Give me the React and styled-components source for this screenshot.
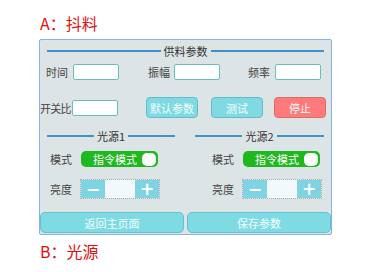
import React from 'react';
import styled, { createGlobalStyle } from 'styled-components';

const GlobalStyle = createGlobalStyle`
  body {
    margin: 0;
    background: #ffffff;
    font-family: "Noto Sans CJK SC", "Noto Sans", sans-serif;
  }
`;

const Page = styled.div`
  width: 370px;
  height: 272px;
  overflow: hidden;
`;

const Heading = styled.div`
  padding-left: 40px;
  margin-top: ${p => p.$top}px;
  line-height: 22px;
  height: 22px;
  font-size: 16px;
  color: #e01010;
`;

const Panel = styled.div`
  margin: 5px 0 0 39px;
  width: 291px;
  height: 194px;
  border: 1px solid #86b2e6;
  border-radius: 2px;
  background: #dde4e5;
  display: flex;
  flex-direction: column;
`;

const Legend = styled.div`
  display: flex;
  align-items: center;
  gap: 3px;
  height: 14px;
  margin: ${p => p.$top || 0}px ${p => p.$right || 7}px 0 ${p => p.$left || 7}px;
  font-size: 11px;
  color: #333;
  white-space: nowrap;
`;

const Line = styled.span`
  flex: 1;
  height: 2px;
  background: #3f93c9;
`;

const Row = styled.div`
  display: flex;
  align-items: center;
  height: ${p => p.$h}px;
  margin-top: ${p => p.$top}px;
  padding-left: ${p => p.$left}px;
`;

const Field = styled.div`
  display: flex;
  align-items: center;
  gap: ${p => p.$gap}px;
  width: ${p => p.$w}px;
`;

const Label = styled.span`
  font-size: 11px;
  color: #444;
  white-space: nowrap;
  letter-spacing: ${p => p.$tight ? '-0.7px' : 'normal'};
`;

const Input = styled.div`
  width: 44px;
  height: 14px;
  background: #ffffff;
  border: 1px solid #68bfb6;
  border-radius: 2px;
`;

const Button = styled.div`
  width: ${p => p.$w || 52}px;
  height: ${p => p.$h || 21}px;
  margin-left: ${p => p.$ml || 0}px;
  box-sizing: border-box;
  display: flex;
  align-items: center;
  justify-content: center;
  background: ${p => (p.$danger ? '#ff7b7b' : '#80d9e3')};
  border: 1px solid ${p => (p.$danger ? '#d86b6b' : '#5ebfc8')};
  border-radius: 4px;
  color: #f4ffff;
  font-size: 11px;
`;

const Columns = styled.div`
  display: grid;
  grid-template-columns: 145px 1fr;
  margin-top: 11px;
`;

const Column = styled.div`
  display: flex;
  flex-direction: column;
`;

const Toggle = styled.div`
  width: 77px;
  height: 16px;
  box-sizing: border-box;
  background: #1fb81f;
  border-radius: 5px;
  display: flex;
  align-items: center;
  padding: 0 2px 0 12px;
  color: #ffffff;
  font-size: 11px;
`;

const Knob = styled.span`
  margin-left: auto;
  width: 14px;
  height: 13px;
  border-radius: 5px;
  background: #ffffff;
`;

const Stepper = styled.div`
  display: grid;
  grid-template-columns: 24px 30px 24px;
  width: 78px;
  height: 18px;
  outline: 1px dotted #a8b4b8;
`;

const StepBtn = styled.div`
  background: #7fd4e4;
  color: #ffffff;
  font-size: 17px;
  font-weight: bold;
  font-family: "DejaVu Sans", sans-serif;
  display: flex;
  align-items: center;
  justify-content: center;
  line-height: 1;
`;

const StepValue = styled.div`
  background: #f3f8fc;
`;

const Footer = styled.div`
  display: grid;
  grid-template-columns: 1fr 1fr;
  gap: 3px;
  margin-top: 14px;
`;

const BigButton = styled(Button)`
  width: auto;
  height: 21px;
  background: #7edbe4;
  border-color: #62c3cc;
  border-radius: 5px;
`;

function LightSource({ name, left, right, labelLeft }) {
  return (
    <Column>
      <Legend $left={left} $right={right}>
        <Line />
        {name}
        <Line />
      </Legend>
      <Row $h={16} $top={8} $left={labelLeft}>
        <Field $gap={9}>
          <Label>模式</Label>
          <Toggle>
            指令模式
            <Knob />
          </Toggle>
        </Field>
      </Row>
      <Row $h={18} $top={13} $left={labelLeft}>
        <Field $gap={9}>
          <Label>亮度</Label>
          <Stepper>
            <StepBtn>−</StepBtn>
            <StepValue />
            <StepBtn>+</StepBtn>
          </Stepper>
        </Field>
      </Row>
    </Column>
  );
}

function App() {
  return (
    <Page>
      <GlobalStyle />
      <Heading $top={12}>A：抖料</Heading>
      <Panel>
        <Legend $top={4}>
          <Line />
          供料参数
          <Line />
        </Legend>
        <Row $h={16} $top={6} $left={6}>
          <Field $gap={5} $w={102}>
            <Label>时间</Label>
            <Input />
          </Field>
          <Field $gap={4} $w={100}>
            <Label>振幅</Label>
            <Input />
          </Field>
          <Field $gap={5}>
            <Label>频率</Label>
            <Input />
          </Field>
        </Row>
        <Row $h={21} $top={17} $left={0}>
          <Field $gap={1} $w={106}>
            <Label $tight>开关比</Label>
            <Input />
          </Field>
          <Button>默认参数</Button>
          <Button $ml={13}>测试</Button>
          <Button $ml={11} $danger>停止</Button>
        </Row>
        <Columns>
          <LightSource name="光源1" left={7} right={10} labelLeft={10} />
          <LightSource name="光源2" left={10} right={7} labelLeft={27} />
        </Columns>
        <Footer>
          <BigButton>返回主页面</BigButton>
          <BigButton>保存参数</BigButton>
        </Footer>
      </Panel>
      <Heading $top={5}>B：光源</Heading>
    </Page>
  );
}

export default App;
